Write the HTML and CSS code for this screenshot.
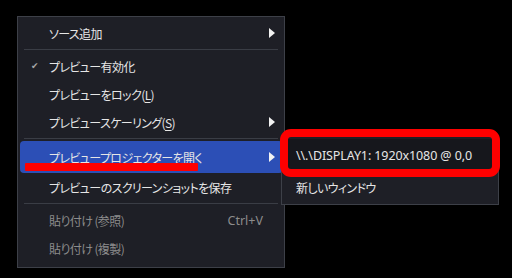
FILE: index.html
```html
<!DOCTYPE html>
<html lang="ja">
<head>
<meta charset="utf-8">
<link rel="stylesheet" href="styles.css">
</head>
<body>
<div class="stage">
  <div class="menu">
    <div class="item"><span class="label">ソース追加</span><span class="arrow"></span></div>
    <div class="sep"></div>
    <div class="item"><span class="check">✔</span><span class="label">プレビュー有効化</span></div>
    <div class="item"><span class="label">プレビューをロック(<u>L</u>)</span></div>
    <div class="item"><span class="label">プレビュースケーリング(<u>S</u>)</span><span class="arrow"></span></div>
    <div class="sep"></div>
    <div class="item open"><span class="label">プレビュープロジェクターを開く</span><span class="arrow"></span></div>
    <div class="item"><span class="label">プレビューのスクリーンショットを保存</span></div>
    <div class="sep"></div>
    <div class="item disabled"><span class="label">貼り付け (参照)</span><span class="shortcut">Ctrl+V</span></div>
    <div class="item disabled"><span class="label">貼り付け (複製)</span></div>
  </div>
  <div class="submenu">
    <div class="subitem hover">\\.\DISPLAY1: 1920x1080 @ 0,0</div>
    <div class="subitem">新しいウィンドウ</div>
  </div>
  <div class="mark-box"></div>
  <div class="mark-line"></div>
</div>
</body>
</html>
```
FILE: styles.css
```css
html, body {
  margin: 0;
  padding: 0;
  background: #000;
}
body {
  width: 512px;
  height: 278px;
  overflow: hidden;
  font-family: "Noto Sans CJK JP", "Noto Sans", sans-serif;
  font-size: 12px;
  letter-spacing: -0.6px;
  font-feature-settings: "palt" 1;
  color: #e6e6e6;
}
.stage {
  position: relative;
  width: 512px;
  height: 278px;
  padding: 16px 0 0 17px;
  box-sizing: border-box;
}
.menu {
  width: 266px;
  background: #1e1f26;
  border: 1px solid #3d4048;
  padding: 2px 0 5px;
  display: flex;
  flex-direction: column;
}
.item {
  position: relative;
  height: 28px;
  display: flex;
  align-items: center;
  padding: 0 8px 0 29px;
  margin: 0 1px 0 2px;
  border-radius: 4px;
}
.item .label {
  flex: 1;
  white-space: nowrap;
}
.item u {
  text-decoration-thickness: 1px;
  text-underline-offset: 2px;
}
.item.open {
  height: 32px;
  background: #2c4fb6;
}
.item.disabled {
  color: #8c8c8c;
}
.check {
  position: absolute;
  left: 11px;
  top: 50%;
  transform: translateY(-50%);
  font-size: 9px;
  letter-spacing: 0;
  color: #a8a8a8;
  font-family: "DejaVu Sans", sans-serif;
}
.arrow {
  width: 0;
  height: 0;
  border-top: 5px solid transparent;
  border-bottom: 5px solid transparent;
  border-left: 6px solid #f2f2f2;
}
.shortcut {
  margin-right: 12px;
  font-family: "Noto Sans", sans-serif;
  font-size: 12.5px;
  letter-spacing: 0;
  color: #8c8c8c;
}
.sep {
  height: 1px;
  background: #3a3d45;
  margin: 2px 6px 2px 6px;
}
.submenu {
  position: absolute;
  left: 281px;
  top: 136px;
  width: 216px;
  background: #1e1f26;
  border: 1px solid #3d4048;
  padding: 2px 0 1px;
}
.subitem {
  height: 32px;
  display: flex;
  align-items: center;
  padding-left: 12px;
  margin: 0 2px;
  border-radius: 3px;
  white-space: nowrap;
}
.subitem.hover {
  background: #16171c;
  font-family: "Noto Sans", "Noto Sans CJK JP", sans-serif;
  font-size: 12.5px;
  letter-spacing: -0.1px;
}
.mark-box {
  position: absolute;
  left: 280px;
  top: 129px;
  width: 220px;
  height: 48px;
  box-sizing: border-box;
  border: 8px solid #fe0000;
  border-radius: 11px;
}
.mark-line {
  position: absolute;
  left: 25px;
  top: 163px;
  width: 173px;
  height: 8px;
  background: #fe0000;
  border-radius: 1px;
}
```
